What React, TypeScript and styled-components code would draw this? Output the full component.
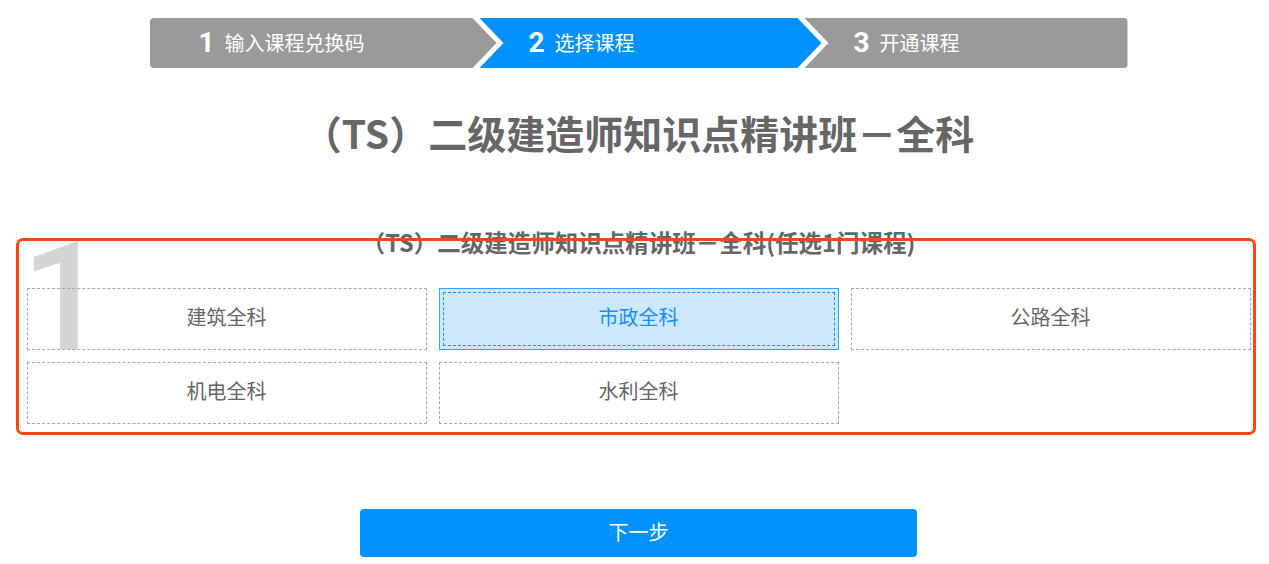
import React, { FC } from 'react';
import styled, { createGlobalStyle, css } from 'styled-components';

const GlobalStyle = createGlobalStyle`
    body {
        margin: 0;
        background: #fff;
        font-family: "Noto Sans CJK SC", "Noto Sans", sans-serif;
    }
`;

const Page = styled.div`
    display: flex;
    flex-direction: column;
    align-items: center;
    padding: 18px 0 0 8px;
`;

const Steps = styled.div`
    display: flex;
    width: 978px;
    height: 50px;
`;

type StepKind = 'first' | 'middle' | 'last';

const shapes: Record<StepKind, string> = {
    first: 'polygon(0 0, calc(100% - 24px) 0, 100% 50%, calc(100% - 24px) 100%, 0 100%)',
    middle:
        'polygon(0 0, calc(100% - 24px) 0, 100% 50%, calc(100% - 24px) 100%, 0 100%, 24px 50%)',
    last: 'polygon(0 0, 100% 0, 100% 100%, 0 100%, 24px 50%)',
};

const Step = styled.div<{ $w: number; $kind: StepKind; $active?: boolean }>`
    flex: 0 0 ${(p) => p.$w}px;
    box-sizing: border-box;
    margin-left: ${(p) => (p.$kind === 'first' ? 0 : -17)}px;
    padding-left: 49px;
    display: flex;
    align-items: center;
    color: #fff;
    background: ${(p) => (p.$active ? '#0091ff' : '#9a9a9a')};
    clip-path: ${(p) => shapes[p.$kind]};
    ${(p) =>
        p.$kind === 'first' &&
        css`
            border-radius: 4px 0 0 4px;
        `}
    ${(p) =>
        p.$kind === 'last' &&
        css`
            border-radius: 0 4px 4px 0;
        `}
`;

const StepNum = styled.span`
    font: 700 28px/1 Roboto, "Liberation Sans", Arial, sans-serif;
    margin-right: 10px;
`;

const StepLabel = styled.span`
    font-size: 20px;
    line-height: 1;
`;

const Title = styled.h1`
    margin: 37px 0 0;
    font-size: 39px;
    line-height: 55px;
    font-weight: 700;
    color: #666;
    text-align: center;
`;

const Section = styled.section`
    position: relative;
    width: 1224px;
    margin-top: 66px;
`;

const Subtitle = styled.h2`
    margin: 0;
    font-size: 23.5px;
    line-height: 32px;
    font-weight: 700;
    color: #666;
    text-align: center;
`;

const Watermark = styled.div`
    position: absolute;
    left: -5px;
    top: -3px;
    font: 500 150px/1 Roboto, "Liberation Sans", Arial, sans-serif;
    color: #d4d4d4;
    pointer-events: none;
`;

const Grid = styled.div`
    position: relative;
    display: grid;
    grid-template-columns: repeat(3, 1fr);
    gap: 12px;
    margin-top: 30px;
`;

const Option = styled.div<{ $selected?: boolean }>`
    height: 62px;
    box-sizing: border-box;
    padding-bottom: 5px;
    display: flex;
    align-items: center;
    justify-content: center;
    font-size: 20px;
    color: #666;
    border: 1px dashed #a8a8a8;
    cursor: pointer;
    ${(p) =>
        p.$selected &&
        css`
            background: #cde7fd;
            border: 1px solid #3aa0f3;
            outline: 1px dashed #1a8ff5;
            outline-offset: -5px;
            color: #1a8ff5;
        `}
`;

const Frame = styled.div`
    position: absolute;
    left: -11px;
    right: -5px;
    top: 12px;
    bottom: -11px;
    border: 3px solid #ff4612;
    border-radius: 7px;
    pointer-events: none;
`;

const NextButton = styled.button`
    margin-top: 85px;
    width: 557px;
    height: 48px;
    padding: 0 0 3px;
    border: none;
    border-radius: 4px;
    background: #0091ff;
    color: #fff;
    font-family: inherit;
    font-size: 20px;
    cursor: pointer;
`;

const steps: { num: string; label: string; w: number; kind: StepKind; active?: boolean }[] = [
    { num: '1', label: '输入课程兑换码', w: 347, kind: 'first' },
    { num: '2', label: '选择课程', w: 342, kind: 'middle', active: true },
    { num: '3', label: '开通课程', w: 323, kind: 'last' },
];

const courses = ['建筑全科', '市政全科', '公路全科', '机电全科', '水利全科'];

const App: FC = () => (
    <>
        <GlobalStyle />
        <Page>
            <Steps>
                {steps.map((s) => (
                    <Step key={s.num} $w={s.w} $kind={s.kind} $active={s.active}>
                        <StepNum>{s.num}</StepNum>
                        <StepLabel>{s.label}</StepLabel>
                    </Step>
                ))}
            </Steps>
            <Title>（TS）二级建造师知识点精讲班－全科</Title>
            <Section>
                <Watermark>1</Watermark>
                <Subtitle>（TS）二级建造师知识点精讲班－全科(任选1门课程)</Subtitle>
                <Grid>
                    {courses.map((c) => (
                        <Option key={c} $selected={c === '市政全科'}>
                            {c}
                        </Option>
                    ))}
                </Grid>
                <Frame />
            </Section>
            <NextButton>下一步</NextButton>
        </Page>
    </>
);

export default App;
